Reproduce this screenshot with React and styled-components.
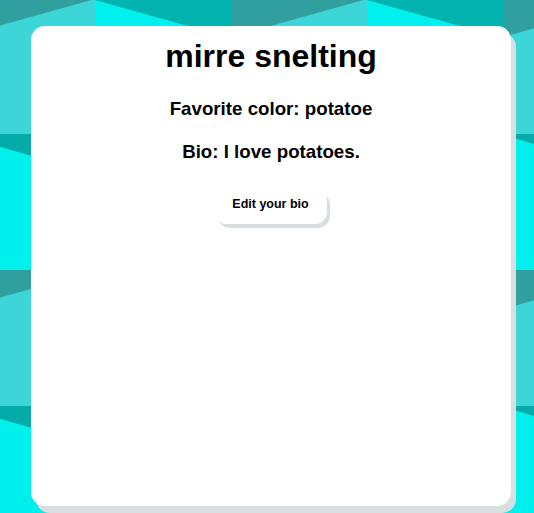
import React from 'react';
import styled, { createGlobalStyle } from 'styled-components';

const tileSvg = `<svg xmlns="http://www.w3.org/2000/svg" width="272" height="272" viewBox="0 0 272 272" shape-rendering="crispEdges">
<rect x="0" y="0" width="136" height="136" fill="#3cd5d8"/>
<polygon points="0,0 136,0 136,1 0,39" fill="#319e9f" shape-rendering="geometricPrecision"/>
<rect x="136" y="0" width="136" height="136" fill="#00f1ed"/>
<polygon points="136,0 272,0 272,40 136,2" fill="#02b3af" shape-rendering="geometricPrecision"/>
<rect x="0" y="136" width="136" height="136" fill="#00f1ed"/>
<polygon points="0,136 136,136 136,176 0,137" fill="#04aba8" shape-rendering="geometricPrecision"/>
<rect x="136" y="136" width="136" height="136" fill="#3cd5d8"/>
<polygon points="136,136 272,136 272,137 136,175" fill="#319e9f" shape-rendering="geometricPrecision"/>
</svg>`;

const tile = `data:image/svg+xml,${encodeURIComponent(tileSvg)}`;

const GlobalStyle = createGlobalStyle`
  html, body {
    margin: 0;
    padding: 0;
  }
  body {
    font-family: "Liberation Sans", Arial, sans-serif;
    color: #000;
  }
`;

const Page = styled.div`
  min-height: 100vh;
  box-sizing: border-box;
  padding: 26px 0 0 31px;
  background-color: #00f1ed;
  background-image: url("${tile}");
  background-position: -41px -2px;
  background-size: 272px 272px;
  overflow: hidden;
`;

const Card = styled.div`
  width: 480px;
  height: 480px;
  box-sizing: border-box;
  padding-top: 12px;
  background: #fff;
  border-radius: 14px;
  box-shadow: 5px 7px 0 #d9dee0;
  display: flex;
  flex-direction: column;
  align-items: center;
  text-align: center;
`;

const Name = styled.h1`
  margin: 0;
  font-size: 32px;
  line-height: 37px;
  font-weight: 700;
`;

const Detail = styled.h3`
  margin: ${(p) => p.$gap}px 0 0;
  font-size: 18.72px;
  line-height: 22px;
  font-weight: 700;
`;

const EditButton = styled.button`
  margin-top: 26px;
  padding: 8px 18px 12px 17px;
  border: none;
  border-radius: 12px;
  background: #fff;
  box-shadow: 3px 4px 0 #d9dee0, 0 0 2px rgba(0, 0, 0, 0.04);
  font-family: "Liberation Sans", Arial, sans-serif;
  font-size: 12.5px;
  line-height: 15px;
  font-weight: 700;
  color: #000;
  cursor: pointer;
`;

function App() {
  const user = {
    name: 'mirre snelting',
    color: 'potatoe',
    bio: 'I love potatoes.',
  };

  return (
    <Page>
      <GlobalStyle />
      <Card>
        <Name>{user.name}</Name>
        <Detail $gap={23}>Favorite color: {user.color}</Detail>
        <Detail $gap={21}>Bio: {user.bio}</Detail>
        <EditButton>Edit your bio</EditButton>
      </Card>
    </Page>
  );
}

export default App;
